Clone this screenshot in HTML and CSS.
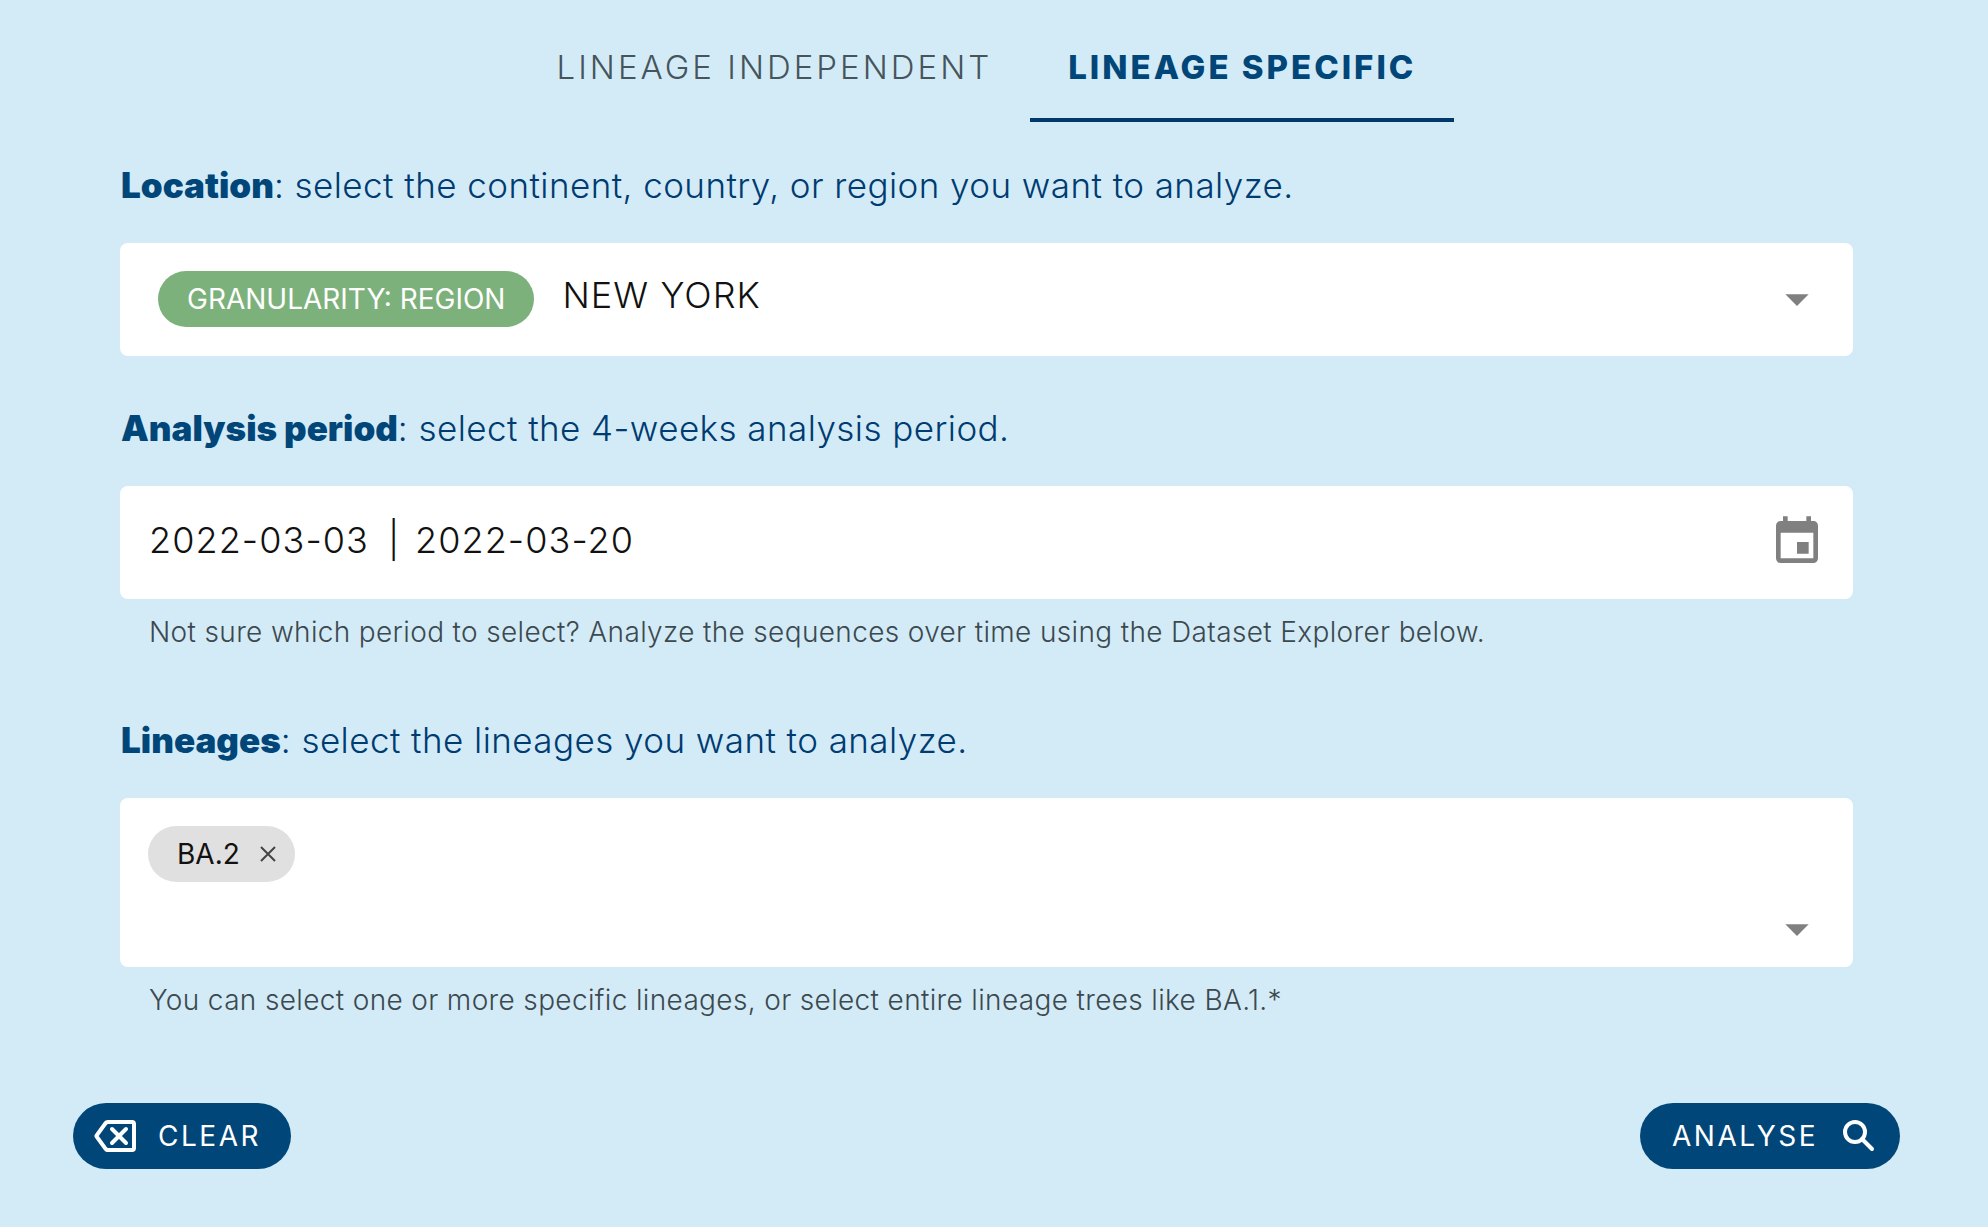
FILE: index.html
```html
<!DOCTYPE html>
<html lang="en">
<head>
<meta charset="utf-8">
<meta name="viewport" content="width=device-width, initial-scale=1">
<title>Lineage specific analysis</title>
<link rel="stylesheet" href="styles.css">
</head>
<body>
<main class="page">
  <div class="tabs" role="tablist">
    <button class="tab" type="button" role="tab" aria-selected="false">LINEAGE INDEPENDENT</button>
    <button class="tab tab-active" type="button" role="tab" aria-selected="true">LINEAGE SPECIFIC</button>
  </div>

  <form class="form">
    <section class="group">
      <label class="label" for="location"><strong>Location</strong>: select the continent, country, or region you want to analyze.</label>
      <div class="field field-location">
        <span class="chip chip-green">GRANULARITY: REGION</span>
        <select class="control" id="location"><option>NEW YORK</option></select>
        <svg class="icon" viewBox="0 0 24 24" aria-hidden="true"><path d="M7,10L12,15L17,10H7Z"/></svg>
      </div>
    </section>

    <section class="group">
      <label class="label" for="period-start"><strong>Analysis period</strong>: select the 4-weeks analysis period.</label>
      <div class="field field-period">
        <input class="control control-start" id="period-start" type="text" value="2022-03-03" readonly>
        <span class="divider">|</span>
        <input class="control control-end" type="text" value="2022-03-20" aria-label="End of analysis period" readonly>
        <svg class="icon" viewBox="0 0 24 24" aria-hidden="true"><path d="M19,19H5V8H19M16,1V3H8V1H6V3H5C3.89,3 3,3.89 3,5V19A2,2 0 0,0 5,21H19A2,2 0 0,0 21,19V5C21,3.89 20.1,3 19,3H18V1M17,12H12V17H17V12Z"/></svg>
      </div>
      <p class="hint">Not sure which period to select? Analyze the sequences over time using the Dataset Explorer below.</p>
    </section>

    <section class="group">
      <label class="label" for="lineages"><strong>Lineages</strong>: select the lineages you want to analyze.</label>
      <div class="field field-lineages">
        <span class="chip chip-grey">BA.2
          <button class="chip-close" type="button" aria-label="Remove BA.2"><svg viewBox="0 0 18 18" aria-hidden="true"><path d="M2 2L16 16M16 2L2 16"/></svg></button>
        </span>
        <div class="field-row">
          <select class="control" id="lineages"><option></option></select>
          <svg class="icon" viewBox="0 0 24 24" aria-hidden="true"><path d="M7,10L12,15L17,10H7Z"/></svg>
        </div>
      </div>
      <p class="hint">You can select one or more specific lineages, or select entire lineage trees like BA.1.*</p>
    </section>
  </form>

  <div class="actions">
    <button class="action action-clear" type="button">
      <svg class="icon-clear" viewBox="0 0 42 32" aria-hidden="true"><path d="M14 2H38Q40 2 40 4V28Q40 30 38 30H14Q12 30 11 28L3 17Q2 16 3 15L11 4Q12 2 14 2Z"/><path d="M18 9L32 23M32 9L18 23"/></svg>
      CLEAR
    </button>
    <button class="action action-analyse" type="button">
      ANALYSE
      <svg class="icon-search" viewBox="0 0 32 32" aria-hidden="true"><circle cx="12" cy="12" r="10"/><path d="M19 19L29 29"/></svg>
    </button>
  </div>
</main>
</body>
</html>
```
FILE: styles.css
```css
* {
  box-sizing: border-box;
}

body {
  margin: 0;
  background: #d3ebf7;
  color: #003b71;
  font-family: Inter, "Liberation Sans", sans-serif;
}

button,
input,
select {
  margin: 0;
  padding: 0;
  border: 0;
  background: none;
  color: inherit;
  font: inherit;
}

.page {
  padding: 12px 88px 56px 73px;
}

.tabs {
  display: flex;
  justify-content: center;
}

.tab {
  height: 110px;
  padding: 3px 38px 0;
  border-bottom: 4px solid transparent;
  color: #46545b;
  font-size: 33px;
  font-weight: 300;
  letter-spacing: 3px;
}

.tab-active {
  border-color: #003869;
  color: #014678;
  font-weight: 800;
}

.form {
  padding: 0 47px;
}

.group {
  display: flex;
  flex-direction: column;
  padding-top: 39px;
}

.group + .group {
  padding-top: 48px;
}

.group:last-child {
  padding-top: 66px;
}

.label {
  margin-bottom: 34px;
  padding-left: 1px;
  font-size: 35px;
  font-weight: 300;
  line-height: 48px;
  letter-spacing: 0.0125em;
}

.label strong {
  color: #014678;
  font-weight: 900;
  letter-spacing: 0;
}

.field {
  display: flex;
  align-items: flex-start;
  min-height: 113px;
  padding: 28px;
  border-radius: 8px;
  background: #fff;
  color: #111;
}

.field-location {
  gap: 28px;
  padding-left: 38px;
}

.field-lineages {
  flex-direction: column;
  align-items: stretch;
  height: 169px;
  padding-bottom: 10px;
}

.field-row {
  display: flex;
  align-items: center;
  margin-top: 19px;
}

.control,
.divider {
  height: 56px;
  font-size: 36px;
  font-weight: 300;
  letter-spacing: 0.03em;
}

.control {
  flex: 1;
  min-width: 0;
  padding-bottom: 8px;
  appearance: none;
  outline: none;
}

.field-period .control,
.divider {
  padding-bottom: 4px;
}

.field-period .control-start {
  flex: none;
  width: 240px;
  padding-left: 1px;
}

.divider {
  width: 27px;
  line-height: 52px;
}

.icon {
  flex: none;
  width: 56px;
  height: 56px;
  fill: #808080;
}

.chip {
  display: flex;
  align-items: center;
  align-self: flex-start;
  height: 56px;
  padding: 0 29px;
  border-radius: 28px;
  font-size: 28px;
  white-space: nowrap;
}

.chip-green {
  background: #7cb17c;
  color: #fff;
}

.chip-grey {
  gap: 19px;
  padding-right: 18px;
  background: #e0e0e0;
}

.chip-close {
  display: flex;
}

.chip-close svg {
  width: 18px;
  height: 18px;
  fill: none;
  stroke: #444;
  stroke-width: 2;
}

.hint {
  margin: 15px 0 0;
  padding-left: 29px;
  color: #3c494f;
  font-size: 28px;
  font-weight: 300;
  line-height: 36px;
  letter-spacing: 0.0125em;
}

.actions {
  display: flex;
  justify-content: space-between;
  margin-top: 85px;
}

.action {
  display: flex;
  align-items: center;
  height: 66px;
  border-radius: 33px;
  background: #014678;
  color: #fff;
  font-size: 28px;
  font-weight: 400;
  letter-spacing: 0.09em;
}

.action svg {
  fill: none;
  stroke: #fff;
  stroke-width: 4;
  stroke-linecap: round;
}

.action-clear {
  gap: 22px;
  padding: 0 30px 0 21px;
}

.action-analyse {
  gap: 25px;
  padding: 0 25px 0 32px;
}

.icon-clear {
  width: 42px;
  height: 32px;
}

.icon-search {
  width: 32px;
  height: 32px;
}
```
